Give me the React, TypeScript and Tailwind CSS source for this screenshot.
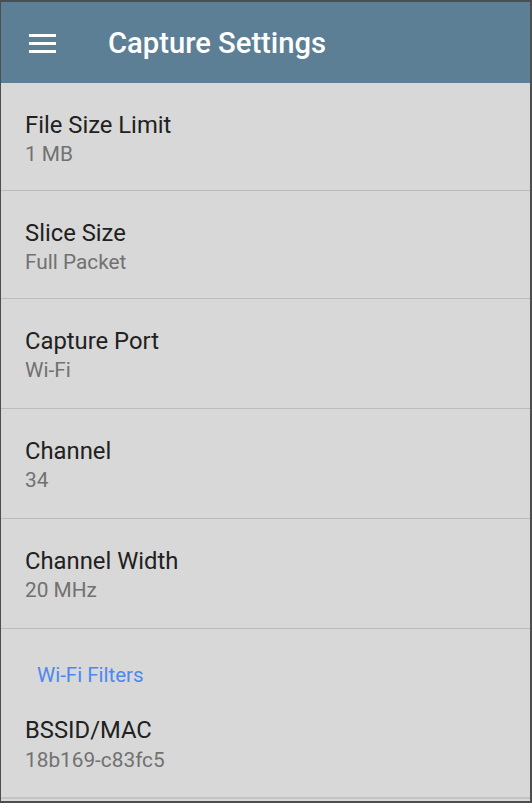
import { FC } from 'react';

type SettingRowProps = {
  title: string;
  value: string;
  height: string;
};

const SettingRow: FC<SettingRowProps> = ({ title, value, height }) => (
  <div className={`${height} border-b border-[#bcbcbc] pl-[24px] pt-[27px]`}>
    <div className="text-[23.8px] leading-[30px] text-[#212121]">{title}</div>
    <div className="mt-[1px] text-[20.8px] leading-[26px] text-[#717171]">
      {value}
    </div>
  </div>
);

const rows = [
  { title: 'File Size Limit', value: '1 MB', height: 'h-[108px]' },
  { title: 'Slice Size', value: 'Full Packet', height: 'h-[108px]' },
  { title: 'Capture Port', value: 'Wi-Fi', height: 'h-[110px]' },
  { title: 'Channel', value: '34', height: 'h-[110px]' },
  { title: 'Channel Width', value: '20 MHz', height: 'h-[110px]' },
];

const App: FC = () => {
  return (
    <div
      className="flex h-[803px] w-[532px] flex-col overflow-hidden border-t-2 border-r-2 border-b-2 border-l border-[#4d4d4d] bg-[#d8d8d8]"
      style={{ fontFamily: 'Roboto, "Noto Sans", sans-serif' }}
    >
      <header className="flex h-[81px] shrink-0 items-center bg-[#5d7f96]">
        <div className="ml-[28px] mt-[1px] flex w-[27px] flex-col gap-[5px]">
          <span className="h-[3px] bg-white" />
          <span className="h-[3px] bg-white" />
          <span className="h-[3px] bg-white" />
        </div>
        <h1 className="ml-[52px] mt-[3px] text-[29.2px] font-medium text-white">
          Capture Settings
        </h1>
      </header>
      {rows.map((row) => (
        <SettingRow key={row.title} {...row} />
      ))}
      <div className="pl-[36px] pt-[33px] text-[20.5px] leading-[26px] text-[#4a89f3]">
        Wi-Fi Filters
      </div>
      <div className="h-[111px] border-b-2 border-[#c4c4c4] pl-[24px] pt-[27px]">
        <div className="text-[23.8px] leading-[30px] text-[#212121]">
          BSSID/MAC
        </div>
        <div className="mt-[2px] text-[20.8px] leading-[26px] text-[#717171]">
          18b169-c83fc5
        </div>
      </div>
    </div>
  );
};

export default App;
